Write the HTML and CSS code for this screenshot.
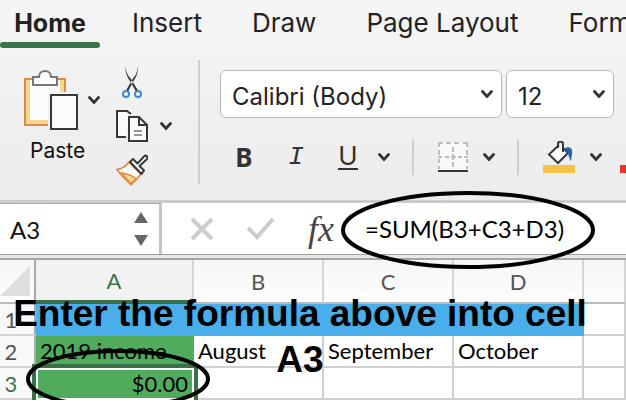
FILE: index.html
```html
<!DOCTYPE html>
<html lang="en">
<head>
    <meta charset="UTF-8">
    <meta name="viewport" content="width=device-width, initial-scale=1.0">
    <title>Workbook</title>
    <link rel="stylesheet" href="styles.css">
</head>
<body>
    <svg class="defs" width="0" height="0" aria-hidden="true">
        <symbol id="chevron" viewBox="0 0 12 10">
            <path d="M1.5 2.500 L6 7.5 L10.5 2.500" fill="none" stroke="#333" stroke-width="2.800" stroke-linecap="round"/>
        </symbol>
    </svg>
    <header class="top">
        <nav class="tabs">
            <a href="#home" class="tab active">Home</a>
            <a href="#insert" class="tab">Insert</a>
            <a href="#draw" class="tab">Draw</a>
            <a href="#layout" class="tab">Page Layout</a>
            <a href="#formulas" class="tab">Formulas</a>
        </nav>
        <div class="ribbon">
            <div class="paste-group">
                <button type="button" class="paste" aria-labelledby="paste-label">
                    <svg width="54" height="60" viewBox="0 0 54 60">
                        <path d="M1 9 H41 V55 H1 Z" fill="#fbfbfb" stroke="#e08a44" stroke-width="2"/>
                        <path d="M4 10 V52 H38 V10" fill="none" stroke="#f5d993" stroke-width="4"/>
                        <path d="M9 7 H15 C15 -1 27 -1 27 7 H33 V15 H9 Z" fill="#fbfbfb" stroke="#777" stroke-width="2"/>
                        <path d="M24 22 H54 V60 H24 Z" fill="#f2f2f2"/>
                        <path d="M27 25 H53 V59 H27 Z" fill="#fbfbfb" stroke="#383838" stroke-width="2"/>
                    </svg>
                </button>
                <button type="button" class="more" aria-label="Paste options"><svg width="12" height="10"><use href="#chevron"/></svg></button>
                <span class="paste-label" id="paste-label">Paste</span>
            </div>
            <div class="clip-group">
                <button type="button" aria-label="Cut">
                    <svg width="32" height="32" viewBox="0 0 32 32">
                        <path d="M9.500 .5 C10 6 11.500 9 15 13 L22 24.500 L20 25.500 L14.500 16 C10.500 10 9 5 9.500 .5 Z M22 .5 C21.500 6 20 9 16.500 13 L10 24.500 L12 25.500 L17 16 C21 10 22.500 5 22 .5 Z" fill="#383838"/>
                        <circle cx="10" cy="28" r="3" fill="#fff" stroke="#3b8acb" stroke-width="2"/>
                        <circle cx="22" cy="28" r="3" fill="#fff" stroke="#3b8acb" stroke-width="2"/>
                    </svg>
                </button>
                <div class="copy">
                    <button type="button" aria-label="Copy">
                        <svg width="32" height="32" viewBox="0 0 32 32">
                            <path d="M10 27 H1 V1 H11 L15 4" fill="#fbfbfb" stroke="#383838" stroke-width="2"/>
                            <path d="M13 7 H23 L31 15 V31 H13 Z" fill="#fbfbfb" stroke="#383838" stroke-width="2"/>
                            <path d="M23 7 V15 H31" fill="none" stroke="#383838" stroke-width="2"/>
                            <path d="M18 21 H26 M18 25 H26" stroke="#777" stroke-width="1.600"/>
                        </svg>
                    </button>
                    <button type="button" class="more" aria-label="Copy options"><svg width="12" height="10"><use href="#chevron"/></svg></button>
                </div>
                <button type="button" aria-label="Format Painter">
                    <svg width="32" height="32" viewBox="0 0 32 32">
                        <path d="M1 15.500 C6 15 10 12 13 8 L25 20 C22 24 19 27 15 30.500 C10 26 5 21 1 15.500 Z" fill="#fbfbfb" stroke="#e08a44" stroke-width="1.800"/>
                        <path d="M6 19 C12 20 17 22 20 25 L15 29.500 C11 26 9 23 6 19 Z" fill="#f5d993" stroke="#e08a44" stroke-width="1.500"/>
                        <path d="M14 8 L17 5 L21.500 9.500 L28 2.500 C30 .5 33 3 30.500 5.500 L23.500 12 L28 16.500 L25.500 20 Z" fill="#fbfbfb" stroke="#383838" stroke-width="2" stroke-linejoin="round"/>
                    </svg>
                </button>
            </div>
            <div class="font-group">
                <div class="pickers">
                    <div class="picker font-name">
                        <select aria-label="Font"><option>Calibri (Body)</option></select>
                        <svg width="12" height="10"><use href="#chevron"/></svg>
                    </div>
                    <div class="picker font-size">
                        <select aria-label="Font size"><option>12</option></select>
                        <svg width="12" height="10"><use href="#chevron"/></svg>
                    </div>
                </div>
                <div class="format">
                    <button type="button" class="letter bold">B</button>
                    <button type="button" class="letter italic">I</button>
                    <button type="button" class="letter underline"><span>U</span></button>
                    <button type="button" class="more" aria-label="Underline options"><svg width="12" height="10"><use href="#chevron"/></svg></button>
                    <span class="divider"></span>
                    <button type="button" aria-label="Borders">
                        <svg width="30" height="30" viewBox="0 0 30 30">
                            <path d="M0 0 H30 V30 H0 Z" fill="#fafafa"/>
                            <path d="M0 1 H5 M8 1 H13 M16 1 H21 M25 1 H30 M0 15 H4 M7 15 H11 M13 15 H18 M20 15 H24 M26 15 H30 M1 0 V5 M1 8 V13 M1 17 V21 M1 24 V27 M29 0 V5 M29 8 V13 M29 17 V21 M29 24 V27 M15 5 V10 M15 12 V18 M15 20 V25" stroke="#bdbdbd" stroke-width="2"/>
                            <path d="M0 29 H30" stroke="#333" stroke-width="2"/>
                        </svg>
                    </button>
                    <button type="button" class="more" aria-label="Border options"><svg width="12" height="10"><use href="#chevron"/></svg></button>
                    <span class="divider"></span>
                    <button type="button" aria-label="Fill Color">
                        <svg width="32" height="32" viewBox="0 0 32 32">
                            <path d="M0 24 H32 V32 H0 Z" fill="#f6c145"/>
                            <path d="M16 4 L6 13.500 L15 22 L25 12 L20 7" fill="#fbfbfb" stroke="#383838" stroke-width="2"/>
                            <path d="M15 7 V3 C15 -.5 20 -.5 20 3 V11" fill="none" stroke="#383838" stroke-width="2"/>
                            <path d="M22 7 C27 5 30 8 29 13 L28 20 C26 18 26 13 24 12 Z" fill="#2264ad"/>
                        </svg>
                    </button>
                    <button type="button" class="more" aria-label="Fill options"><svg width="12" height="10"><use href="#chevron"/></svg></button>
                    <button type="button" class="font-color" aria-label="Font Color">
                        <svg width="32" height="32" viewBox="0 0 32 32"><path d="M0 24 H32 V32 H0 Z" fill="#ee3124"/></svg>
                    </button>
                </div>
            </div>
        </div>
    </header>
    <main>
        <div class="formula-bar">
            <div class="name-box">
                <input type="text" value="A3" aria-label="Name box">
                <svg width="14" height="34" viewBox="0 0 14 34"><path d="M7 0 L14 11 H0 Z M0 23 H14 L7 34 Z" fill="#666"/></svg>
            </div>
            <div class="actions">
                <button type="button" aria-label="Cancel"><svg width="24" height="24" viewBox="0 0 24 24"><path d="M2 2 L22 22 M22 2 L2 22" stroke="#ccc" stroke-width="4"/></svg></button>
                <button type="button" aria-label="Enter"><svg width="28" height="24" viewBox="0 0 28 24"><path d="M1 11 L10 20 L26 2" fill="none" stroke="#ccc" stroke-width="4"/></svg></button>
                <button type="button" class="fx">fx</button>
            </div>
            <input type="text" class="formula" value="=SUM(B3+C3+D3)" aria-label="Formula">
        </div>
        <table class="sheet">
            <colgroup>
                <col class="col-head"><col class="col-a"><col class="col-b"><col class="col-c"><col class="col-d"><col>
            </colgroup>
            <thead>
                <tr>
                    <th class="corner"><svg width="30" height="30" viewBox="0 0 30 30"><path d="M30 0 V30 H0 Z" fill="#dedede"/></svg></th>
                    <th class="current">A</th>
                    <th>B</th>
                    <th>C</th>
                    <th>D</th>
                    <th></th>
                </tr>
            </thead>
            <tbody>
                <tr>
                    <th>1</th>
                    <td class="blue" colspan="4"></td>
                    <td></td>
                </tr>
                <tr>
                    <th>2</th>
                    <td class="green">2019 income</td>
                    <td>August</td>
                    <td>September</td>
                    <td>October</td>
                    <td></td>
                </tr>
                <tr>
                    <th class="current">3</th>
                    <td class="green selected">$0.00</td>
                    <td></td>
                    <td></td>
                    <td></td>
                    <td></td>
                </tr>
            </tbody>
        </table>
    </main>
    <!-- notes drawn over the sheet -->
    <svg class="rings" aria-hidden="true">
        <ellipse cx="468" cy="230" rx="125" ry="37"/>
        <ellipse cx="118" cy="379" rx="90" ry="28"/>
    </svg>
    <p class="note">Enter the formula above into cell A3</p>
</body>
</html>
```
FILE: styles.css
```css
* {
    box-sizing: border-box;
}
body {
    position: relative;
    margin: 0;
    min-height: 100vh;
    overflow: hidden;
    background: #fff;
    color: #222;
    font-family: Inter, "Liberation Sans", sans-serif;
}
.defs {
    position: absolute;
}
svg {
    display: block;
}
button {
    display: flex;
    align-items: center;
    justify-content: center;
    padding: 0;
    border: none;
    background: none;
    color: #333;
    font-family: inherit;
}
.top {
    background: linear-gradient(#f5f5f5, #ececec);
    border-bottom: 3px solid #cbcbcb;
}
.tabs {
    display: flex;
    gap: 50px;
    height: 48px;
}
.tab {
    flex-shrink: 0;
    color: #222;
    font-size: 26px;
    line-height: 46px;
    text-decoration: none;
    white-space: nowrap;
}
.tab.active {
    display: flex;
    flex-direction: column;
    width: 100px;
    margin-right: -18px;
    font-size: 25px;
    font-weight: 700;
    text-align: center;
}
.tab.active::after {
    content: "";
    height: 6px;
    margin-top: -4px;
    border-radius: 3px;
    background: #3c7349;
}
.ribbon {
    display: flex;
    height: 152px;
    padding: 12px 0 16px;
}
.paste-group {
    display: grid;
    grid-template-columns: 54px 20px;
    grid-template-rows: 60px 24px;
    gap: 8px 6px;
    padding: 10px 0 0 24px;
}
.paste-label {
    grid-column: 1 / 3;
    padding-left: 6px;
    color: #111;
    font-size: 21px;
    line-height: 26px;
}
.more {
    width: 20px;
}
.clip-group {
    display: flex;
    flex-direction: column;
    align-items: flex-start;
    gap: 12px;
    width: 84px;
    margin-left: 12px;
    padding-top: 6px;
    border-right: 2px solid #cfcfcf;
}
.copy {
    display: flex;
    gap: 8px;
}
.font-group {
    flex: 1;
    min-width: 0;
    padding: 10px 12px 0 20px;
}
.pickers {
    display: flex;
    gap: 4px;
}
.picker {
    display: grid;
    align-items: center;
}
.picker select,
.picker svg {
    grid-area: 1 / 1;
}
.picker svg {
    justify-self: end;
    margin-right: 9px;
    pointer-events: none;
}
.font-name {
    flex: 1;
}
.font-size {
    width: 108px;
}
select {
    appearance: none;
    width: 100%;
    height: 48px;
    padding: 4px 11px 0;
    border: 1px solid #b5b5b5;
    border-radius: 6px;
    background: #fff;
    color: #222;
    font-family: inherit;
    font-size: 24px;
}
.format {
    display: flex;
    align-items: center;
    height: 36px;
    margin: 21px 0 0 -2px;
}
.format button {
    flex-shrink: 0;
}
.letter {
    width: 52px;
    font-size: 26px;
    line-height: 36px;
}
.bold {
    font-family: "Noto Sans", sans-serif;
    font-weight: 700;
}
.italic {
    font-family: "Liberation Mono", monospace;
    font-style: italic;
}
.underline span {
    border-bottom: 2px solid #333;
    line-height: 24px;
}
.divider {
    width: 2px;
    height: 36px;
    margin: 0 24px 0 18px;
    background: #cfcfcf;
    flex-shrink: 0;
}
.format .more:not(.underline + .more) {
    margin-left: 11px;
}
.font-color {
    margin-left: 14px;
}
.formula-bar {
    display: flex;
    height: 57px;
    border-bottom: 2px solid #a5a5a5;
    background: linear-gradient(#fff 51px, #a0a0a0 51px, #a0a0a0 52px, #e8e8e8 52px);
    padding-bottom: 4px;
}
.name-box {
    display: flex;
    align-items: center;
    justify-content: space-between;
    width: 162px;
    padding-right: 11px;
    border-top: 1px solid #aaa;
    border-right: 3px solid #c4c4c4;
}
input {
    min-width: 0;
    border: none;
    background: none;
    outline: none;
    color: #111;
    font-family: Lato, sans-serif;
    font-size: 24px;
}
.name-box input {
    width: 120px;
    padding: 0 0 0 10px;
}
.actions {
    display: flex;
    align-items: center;
    gap: 33px;
    margin-left: 28px;
}
.fx {
    color: #444;
    font-family: "Liberation Serif", serif;
    font-size: 36px;
    font-style: italic;
}
.formula {
    flex: 1;
    padding: 0;
    margin-left: 31px;
    color: #000;
}
.sheet {
    width: 100%;
    table-layout: fixed;
    border-collapse: separate;
    border-spacing: 0;
    font-family: Lato, sans-serif;
    font-size: 22px;
    color: #000;
}
.col-head {
    width: 36px;
}
.col-a {
    width: 158px;
}
.col-b {
    width: 130px;
}
.col-c {
    width: 130px;
}
.col-d {
    width: 130px;
}
.sheet th {
    height: 32px;
    padding: 0;
    border-right: 2px solid #d5d5d5;
    border-bottom: 2px solid #d5d5d5;
    background: #f8f8f8;
    color: #555;
    font-weight: 400;
}
.sheet thead th {
    height: 44px;
    border-bottom-color: #bbb;
    background: linear-gradient(#f6f6f6, #fdfdfd);
}
.sheet thead .current {
    border-bottom: 4px solid #3a7048;
    background: #f2f2f2;
}
.sheet .current {
    color: #3a7048;
}
.sheet tbody th {
    padding-right: 12px;
    border-right-color: #aaa;
}
.sheet .corner {
    border-right-color: #aaa;
}
.sheet td {
    height: 32px;
    padding: 0 4px;
    border-right: 2px solid #d0d0d0;
    border-bottom: 2px solid #d0d0d0;
    line-height: 28px;
    white-space: nowrap;
}
.sheet .blue {
    border-color: #49aee9;
    background: #49aee9;
}
.sheet .green {
    border-color: #50ac5c;
    background: #50ac5c;
}
.sheet .selected {
    position: relative;
    z-index: 1;
    border: 2px solid #fff;
    outline: 4px solid #3a7048;
    text-align: right;
}
.rings {
    position: absolute;
    z-index: 2;
    top: 0;
    left: 0;
    width: 100%;
    height: 100%;
    fill: none;
    stroke: #000;
    stroke-width: 4px;
    pointer-events: none;
}
.note {
    position: absolute;
    z-index: 2;
    top: 291px;
    left: 0;
    width: 600px;
    margin: 0;
    color: #000;
    font-family: "Liberation Sans", sans-serif;
    font-size: 37px;
    font-weight: 700;
    line-height: 46px;
    text-align: center;
    pointer-events: none;
}
```
